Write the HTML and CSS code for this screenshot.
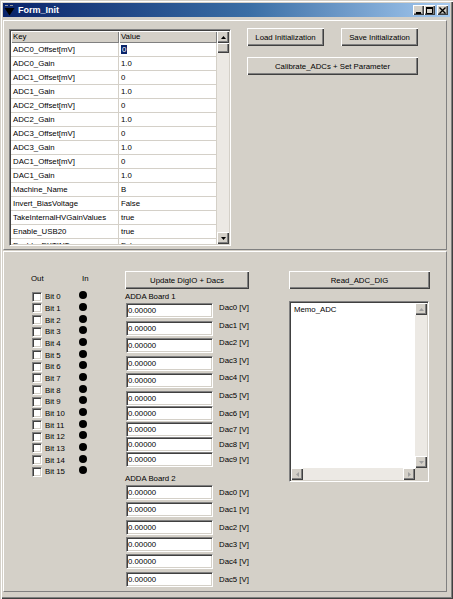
FILE: index.html
```html
<!DOCTYPE html>
<html lang="en">
  <head>
    <title>Form_Init</title>
    <link rel="stylesheet" href="styles.css">
  </head>

  <body>
    <div class="window">
      <!-- Caption -->
      <div class="titlebar">
        <svg class="appicon" width="11" height="12" viewBox="0 0 11 12">
          <path d="M1 1h3v1H1zM6 1h3v1H6z" fill="#9a9a9a" />
          <polygon points="0.5,4 10.5,4 5.5,11.5" fill="#000" />
        </svg>
        <span class="title">Form_Init</span>
        <div class="caption-btns">
          <span class="cbtn">
            <svg width="7" height="7" viewBox="0 0 7 7"><rect x="1" y="5" width="5" height="2" fill="#000" /></svg>
          </span>
          <span class="cbtn">
            <svg width="7" height="7" viewBox="0 0 7 7"><path d="M0.5 0.5h6v6h-6z" fill="none" stroke="#000" /><rect x="0" y="0" width="7" height="2" fill="#000" /></svg>
          </span>
          <span class="cbtn close">
            <svg width="7" height="7" viewBox="0 0 7 7"><path d="M0.5 0.5l6 6M6.5 0.5l-6 6" stroke="#000" stroke-width="1.4" /></svg>
          </span>
        </div>
      </div>

      <!-- Parameter panel -->
      <div class="panel top">
        <div class="grid">
          <div class="cells">
            <div class="hcell">Key</div><div class="hcell">Value</div>
            <div class="cell">ADC0_Offset[mV]</div><div class="cell"><span class="sel">0</span></div>
            <div class="cell">ADC0_Gain</div><div class="cell">1.0</div>
            <div class="cell">ADC1_Offset[mV]</div><div class="cell">0</div>
            <div class="cell">ADC1_Gain</div><div class="cell">1.0</div>
            <div class="cell">ADC2_Offset[mV]</div><div class="cell">0</div>
            <div class="cell">ADC2_Gain</div><div class="cell">1.0</div>
            <div class="cell">ADC3_Offset[mV]</div><div class="cell">0</div>
            <div class="cell">ADC3_Gain</div><div class="cell">1.0</div>
            <div class="cell">DAC1_Offset[mV]</div><div class="cell">0</div>
            <div class="cell">DAC1_Gain</div><div class="cell">1.0</div>
            <div class="cell">Machine_Name</div><div class="cell">B</div>
            <div class="cell">Invert_BiasVoltage</div><div class="cell">False</div>
            <div class="cell">TakeInternalHVGainValues</div><div class="cell">true</div>
            <div class="cell">Enable_USB20</div><div class="cell">true</div>
            <div class="cell">Enable_EXTINT</div><div class="cell">False</div>
          </div>
          <div class="vscroll">
            <span class="sbtn"><svg width="5" height="3" viewBox="0 0 5 3"><polygon points="2.5,0 5,3 0,3" fill="#000" /></svg></span>
            <span class="sbtn thumb"></span>
            <span class="track"></span>
            <span class="sbtn"><svg width="5" height="3" viewBox="0 0 5 3"><polygon points="0,0 5,0 2.5,3" fill="#000" /></svg></span>
          </div>
        </div>

        <div class="actions">
          <div class="btnrow">
            <button class="btn half">Load Initialization</button>
            <button class="btn half">Save Initialization</button>
          </div>
          <button class="btn wide">Calibrate_ADCs + Set Parameter</button>
        </div>
      </div>

      <!-- IO panel -->
      <div class="panel bottom">
        <div class="bits">
          <div class="bits-head"><span class="out">Out</span><span>In</span></div>
          <div class="bit"><span class="chk"></span><span class="bit-label">Bit 0</span><span class="led"></span></div>
          <div class="bit"><span class="chk"></span><span class="bit-label">Bit 1</span><span class="led"></span></div>
          <div class="bit"><span class="chk"></span><span class="bit-label">Bit 2</span><span class="led"></span></div>
          <div class="bit"><span class="chk"></span><span class="bit-label">Bit 3</span><span class="led"></span></div>
          <div class="bit"><span class="chk"></span><span class="bit-label">Bit 4</span><span class="led"></span></div>
          <div class="bit"><span class="chk"></span><span class="bit-label">Bit 5</span><span class="led"></span></div>
          <div class="bit"><span class="chk"></span><span class="bit-label">Bit 6</span><span class="led"></span></div>
          <div class="bit"><span class="chk"></span><span class="bit-label">Bit 7</span><span class="led"></span></div>
          <div class="bit"><span class="chk"></span><span class="bit-label">Bit 8</span><span class="led"></span></div>
          <div class="bit"><span class="chk"></span><span class="bit-label">Bit 9</span><span class="led"></span></div>
          <div class="bit"><span class="chk"></span><span class="bit-label">Bit 10</span><span class="led"></span></div>
          <div class="bit"><span class="chk"></span><span class="bit-label">Bit 11</span><span class="led"></span></div>
          <div class="bit"><span class="chk"></span><span class="bit-label">Bit 12</span><span class="led"></span></div>
          <div class="bit"><span class="chk"></span><span class="bit-label">Bit 13</span><span class="led"></span></div>
          <div class="bit"><span class="chk"></span><span class="bit-label">Bit 14</span><span class="led"></span></div>
          <div class="bit"><span class="chk"></span><span class="bit-label">Bit 15</span><span class="led"></span></div>
        </div>

        <div class="dacs">
          <button class="btn update">Update DigIO + Dacs</button>
          <div class="board-label">ADDA Board 1</div>
          <div class="dac hi"><span class="edit">0.00000</span><span class="dac-label">Dac0 [V]</span></div>
          <div class="dac hi"><span class="edit">0.00000</span><span class="dac-label">Dac1 [V]</span></div>
          <div class="dac hi"><span class="edit">0.00000</span><span class="dac-label">Dac2 [V]</span></div>
          <div class="dac hi"><span class="edit">0.00000</span><span class="dac-label">Dac3 [V]</span></div>
          <div class="dac hi"><span class="edit">0.00000</span><span class="dac-label">Dac4 [V]</span></div>
          <div class="dac hi r15"><span class="edit">0.00000</span><span class="dac-label">Dac5 [V]</span></div>
          <div class="dac r165"><span class="edit">0.00000</span><span class="dac-label">Dac6 [V]</span></div>
          <div class="dac r145"><span class="edit">0.00000</span><span class="dac-label">Dac7 [V]</span></div>
          <div class="dac r15"><span class="edit">0.00000</span><span class="dac-label">Dac8 [V]</span></div>
          <div class="dac r15"><span class="edit">0.00000</span><span class="dac-label">Dac9 [V]</span></div>

          <div class="board-label second">ADDA Board 2</div>
          <div class="dac b2"><span class="edit">0.00000</span><span class="dac-label">Dac0 [V]</span></div>
          <div class="dac b2"><span class="edit">0.00000</span><span class="dac-label">Dac1 [V]</span></div>
          <div class="dac b2"><span class="edit">0.00000</span><span class="dac-label">Dac2 [V]</span></div>
          <div class="dac b2"><span class="edit">0.00000</span><span class="dac-label">Dac3 [V]</span></div>
          <div class="dac b2"><span class="edit">0.00000</span><span class="dac-label">Dac4 [V]</span></div>
          <div class="dac b2"><span class="edit">0.00000</span><span class="dac-label">Dac5 [V]</span></div>
        </div>

        <div class="adc">
          <button class="btn read">Read_ADC_DIG</button>
          <div class="memo">
            <div class="memo-body">
              <div class="memo-text">Memo_ADC</div>
              <div class="vscroll light">
                <span class="sbtn"><svg width="5" height="3" viewBox="0 0 5 3"><polygon points="2.5,0 5,3 0,3" fill="#a0a0a0" /></svg></span>
                <span class="track"></span>
                <span class="sbtn"><svg width="5" height="3" viewBox="0 0 5 3"><polygon points="0,0 5,0 2.5,3" fill="#a0a0a0" /></svg></span>
              </div>
            </div>
            <div class="hscroll">
              <span class="sbtn"><svg width="3" height="5" viewBox="0 0 3 5"><polygon points="0,2.5 3,0 3,5" fill="#a0a0a0" /></svg></span>
              <span class="track"></span>
              <span class="sbtn"><svg width="3" height="5" viewBox="0 0 3 5"><polygon points="0,0 3,2.5 0,5" fill="#a0a0a0" /></svg></span>
              <span class="corner"></span>
            </div>
          </div>
        </div>
      </div>
    </div>
  </body>
</html>
```

FILE: styles.css
```css
body {
  margin: 0;
  background: #d4d0c8;
  font-family: "Liberation Sans", Arial, sans-serif;
  font-size: 7.8px;
  color: #000;
}
.window {
  width: 453px;
  height: 599px;
  box-sizing: border-box;
  padding: 3px;
  background: #d4d0c8;
  box-shadow: inset 1px 1px #d4d0c8, inset 2px 2px #fff, inset -1px -1px #404040, inset -2px -2px #808080;
}

/* caption */
.titlebar {
  display: flex;
  align-items: center;
  height: 14px;
  padding: 0 2px 0 1px;
  background: linear-gradient(90deg, #0a246a, #3a6ea5 55%, #a6caf0);
}
.appicon {
  margin-right: 3px;
}
.title {
  color: #fff;
  font-weight: bold;
  font-size: 9px;
  line-height: 13px;
}
.caption-btns {
  display: flex;
  margin-left: auto;
  gap: 0;
}
.cbtn {
  display: flex;
  align-items: center;
  justify-content: center;
  width: 11px;
  height: 10px;
  background: #d4d0c8;
  box-shadow: inset 1px 1px #fff, inset -1px -1px #404040, inset -2px -2px #808080;
}
.cbtn.close {
  margin-left: 2px;
}

/* panels */
.panel {
  display: flex;
  box-sizing: border-box;
  width: 444px;
  border: 1px solid;
  border-color: #fff #808080 #808080 #fff;
}
.panel.top {
  height: 230px;
  margin-top: 3px;
  padding: 8px 0 0 5px;
}
.panel.bottom {
  height: 341px;
  margin-top: 1px;
  padding: 19px 0 0 27px;
}

/* string grid */
.grid {
  display: flex;
  width: 222px;
  height: 217px;
  box-sizing: border-box;
  border: 1px solid;
  border-color: #808080 #fff #fff #808080;
  box-shadow: inset 1px 1px #404040, inset -1px -1px #d4d0c8;
  padding: 1px;
  background: #fff;
}
.cells {
  display: grid;
  grid-template-columns: 108px 98px;
  grid-template-rows: 12px;
  grid-auto-rows: 14px;
  overflow: hidden;
  flex: 1;
}
.hcell {
  background: #d4d0c8;
  padding-left: 2px;
  line-height: 12px;
  box-shadow: inset 1px 1px #fff, inset -1px -1px #808080;
}
.cell {
  padding-left: 2px;
  line-height: 13px;
  border-right: 1px solid #d4d0c8;
  border-bottom: 1px solid #d4d0c8;
}
.sel {
  background: #0a246a;
  color: #fff;
  padding: 0 1px;
}
.vscroll {
  display: flex;
  flex-direction: column;
  width: 12px;
  background: #ece9e4;
}
.sbtn {
  display: flex;
  align-items: center;
  justify-content: center;
  width: 12px;
  height: 12px;
  flex: none;
  background: #d4d0c8;
  box-shadow: inset 1px 1px #fff, inset -1px -1px #404040, inset -2px -2px #808080;
}
.sbtn.thumb {
  height: 10px;
}
.track {
  flex: 1;
}

/* buttons */
.actions {
  display: flex;
  flex-direction: column;
  gap: 11px;
  margin: -1px 0 0 16px;
}
.btnrow {
  display: flex;
  gap: 17px;
}
.btn {
  height: 18px;
  padding: 0;
  border: none;
  background: #d4d0c8;
  font: inherit;
  color: #000;
  box-shadow: inset 1px 1px #fff, inset -1px -1px #404040, inset -2px -2px #808080;
}
.btn.half {
  width: 77px;
}
.btn.wide {
  width: 171px;
}
.btn.update {
  width: 124px;
}
.btn.read {
  width: 141px;
}

/* digital io */
.bits {
  width: 94px;
}
.bits-head {
  display: flex;
  height: 20px;
  line-height: 16px;
}
.out {
  width: 51px;
}
.bit {
  display: flex;
  align-items: center;
  height: 11.667px;
}
.chk {
  width: 10px;
  height: 10px;
  box-sizing: border-box;
  margin-left: 1px;
  border: 1px solid;
  border-color: #808080 #fff #fff #808080;
  box-shadow: inset 1px 1px #404040, inset -1px -1px #d4d0c8;
  background: #fff;
}
.bit-label {
  width: 34px;
  margin-left: 3px;
}
.led {
  width: 8px;
  height: 8px;
  margin-bottom: 3px;
  border-radius: 50%;
  background: #000;
}

/* dacs */
.dacs {
  display: flex;
  flex-direction: column;
  width: 124px;
}
.board-label {
  height: 12px;
  margin-top: 2px;
  line-height: 12px;
}
.board-label.second {
  margin-top: 6.5px;
}
.dac {
  display: flex;
  align-items: flex-start;
  height: 17.5px;
}
.dac.r15 {
  height: 15px;
}
.dac.r165 {
  height: 16.5px;
}
.dac.r145 {
  height: 14.5px;
}
.dac.b2 {
  height: 17.33px;
}
.edit {
  flex: none;
  width: 87px;
  height: 15px;
  box-sizing: border-box;
  margin-left: 1px;
  padding-left: 1px;
  line-height: 13px;
  border: 1px solid;
  border-color: #808080 #fff #fff #808080;
  box-shadow: inset 1px 1px #404040, inset -1px -1px #d4d0c8;
  background: #fff;
}
.dac-label {
  margin: 3px 0 0 6px;
  line-height: 10px;
}
.dac.hi .dac-label {
  margin-top: 0;
}

/* adc memo */
.adc {
  display: flex;
  flex-direction: column;
  margin-left: 40px;
}
.memo {
  display: flex;
  flex-direction: column;
  width: 140px;
  height: 181px;
  box-sizing: border-box;
  margin-top: 12px;
  border: 1px solid;
  border-color: #808080 #fff #fff #808080;
  box-shadow: inset 1px 1px #404040, inset -1px -1px #d4d0c8;
  padding: 1px;
  background: #fff;
}
.memo-body {
  display: flex;
  flex: 1;
}
.memo-text {
  flex: 1;
  padding: 2px 0 0 3px;
  line-height: 10px;
}
.hscroll {
  display: flex;
  height: 12px;
  background: #ece9e4;
}
.corner {
  width: 12px;
  background: #d4d0c8;
}
```
